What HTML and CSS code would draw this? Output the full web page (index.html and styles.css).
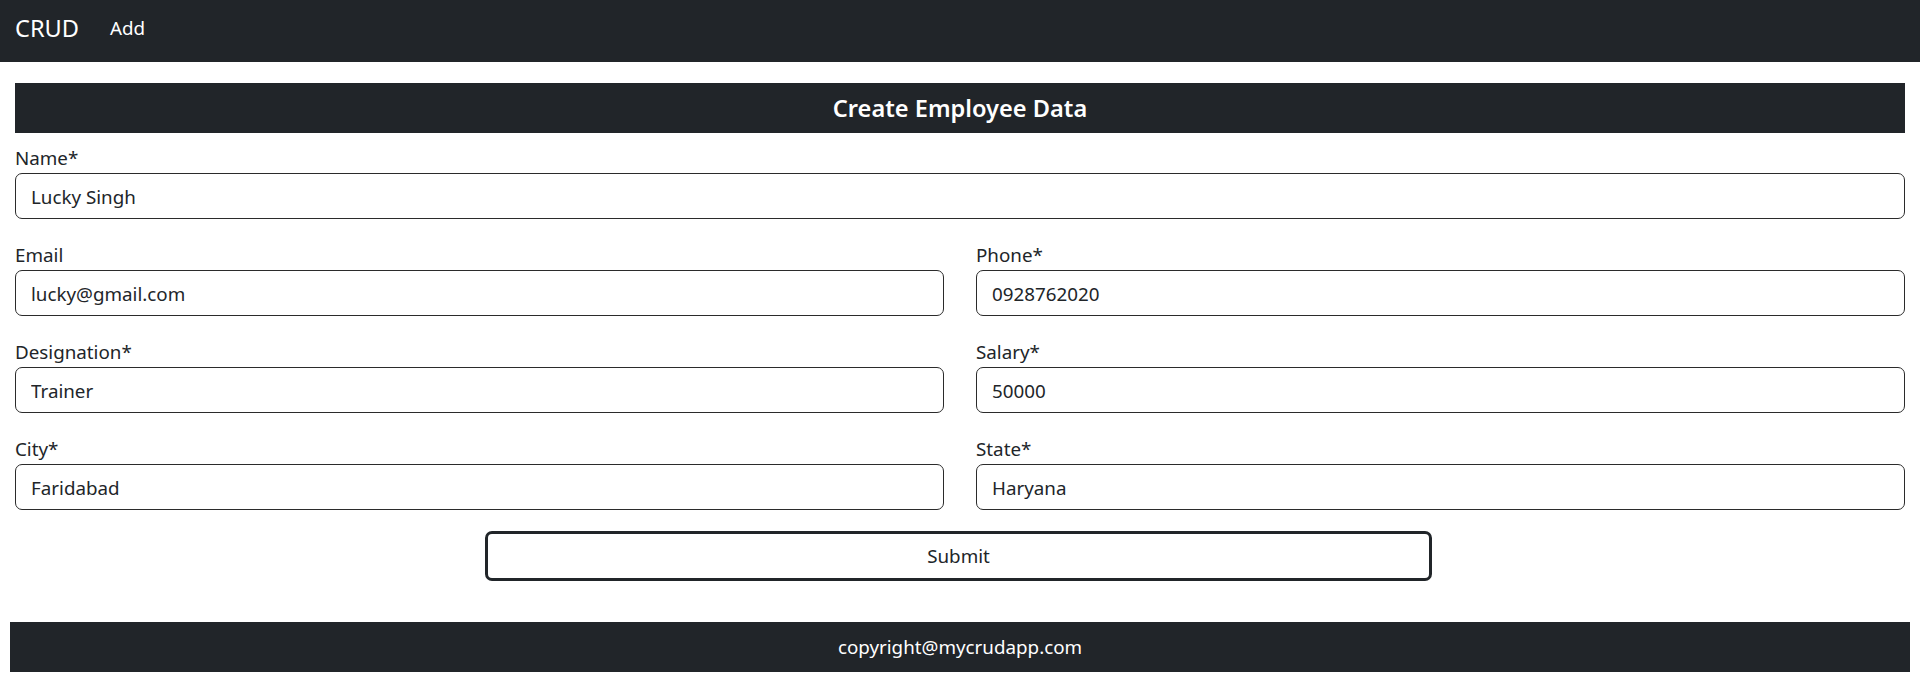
FILE: index.html
```html
<!DOCTYPE html>
<html lang="en">
<head>
<meta charset="utf-8">
<title>CRUD</title>
<link rel="stylesheet" href="styles.css">
</head>
<body>
<nav class="navbar">
  <a class="brand" href="#">CRUD</a>
  <a class="nav-link" href="#">Add</a>
</nav>
<main class="container">
  <h2 class="title">Create Employee Data</h2>
  <form class="form">
    <div class="field full">
      <label>Name*</label>
      <input class="control" type="text" value="Lucky Singh">
    </div>
    <div class="field">
      <label>Email</label>
      <input class="control" type="text" value="lucky@gmail.com">
    </div>
    <div class="field">
      <label>Phone*</label>
      <input class="control" type="text" value="0928762020">
    </div>
    <div class="field">
      <label>Designation*</label>
      <input class="control" type="text" value="Trainer">
    </div>
    <div class="field">
      <label>Salary*</label>
      <input class="control" type="text" value="50000">
    </div>
    <div class="field">
      <label>City*</label>
      <input class="control" type="text" value="Faridabad">
    </div>
    <div class="field">
      <label>State*</label>
      <input class="control" type="text" value="Haryana">
    </div>
    <div class="actions full">
      <button class="submit" type="button">Submit</button>
    </div>
  </form>
</main>
<footer class="footer">copyright@mycrudapp.com</footer>
</body>
</html>
```

FILE: styles.css
```css
* { box-sizing: border-box; }
body {
  margin: 0;
  font-family: "Noto Sans", "Open Sans", sans-serif;
  font-size: 18.8px;
  color: #212529;
  background: #fff;
}
.navbar {
  height: 62px;
  background: #212529;
  display: flex;
  align-items: center;
  padding: 0 15px 6px;
}
.brand {
  color: #fff;
  font-size: 23.6px;
  text-decoration: none;
  margin-right: 31px;
}
.nav-link {
  color: #fff;
  text-decoration: none;
  font-size: 18.8px;
}
.container {
  padding: 0 15px;
  margin-top: 21px;
}
.title {
  margin: 0 0 10px;
  height: 50px;
  background: #212529;
  color: #fff;
  font-size: 23.6px;
  font-weight: 600;
  display: flex;
  align-items: center;
  justify-content: center;
}
.form {
  display: grid;
  grid-template-columns: 1fr 1fr;
  column-gap: 32px;
  row-gap: 21px;
}
.full { grid-column: 1 / -1; }
.field label {
  display: block;
  line-height: 29px;
  padding-top: 1px;
}
.control {
  display: block;
  width: 100%;
  height: 46px;
  padding: 2px 15px 0;
  border: 1px solid #2b2b2b;
  border-radius: 7px;
  font: inherit;
  color: #212529;
  background: #fff;
}
.submit {
  display: block;
  margin-left: 470px;
  width: 947px;
  height: 50px;
  border: 3px solid #212529;
  border-radius: 7px;
  background: #fff;
  font: inherit;
  color: #212529;
}
.footer {
  margin: 41px 10px 0;
  height: 50px;
  background: #212529;
  color: #fff;
  display: flex;
  align-items: center;
  justify-content: center;
}
```
